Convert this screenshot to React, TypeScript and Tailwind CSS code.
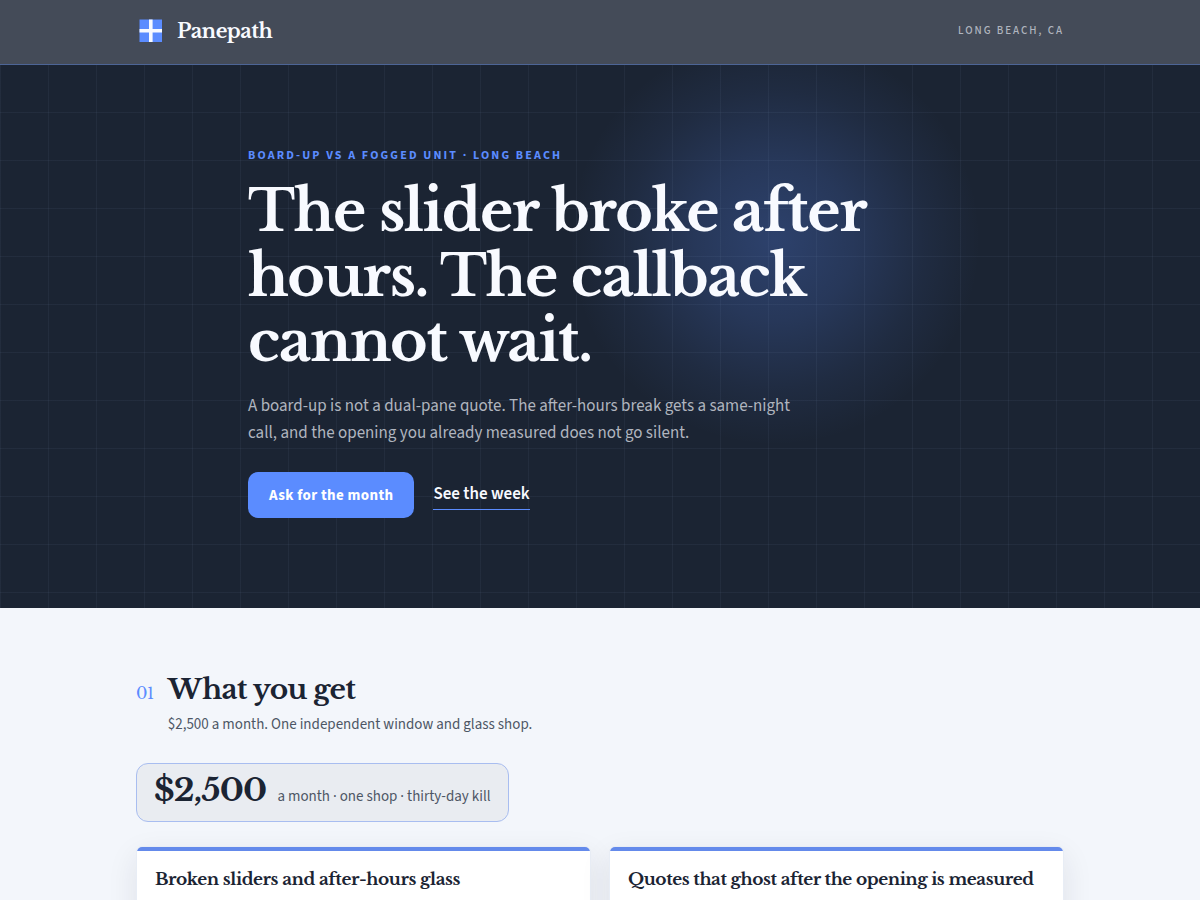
import clsx from "clsx";

const serif =
  "font-['Libre_Baskerville','Liberation_Serif',serif] font-bold tracking-tight";
const sans = "font-['Source_Sans_3','Source_Sans_Pro','Noto_Sans_CJK_SC',sans-serif]";

const features = [
  { title: "Broken sliders and after-hours glass" },
  { title: "Quotes that ghost after the opening is measured" },
];

const Logo = () => (
  <svg width="29" height="30" viewBox="0 0 29 30" aria-hidden="true">
    <rect x="3.5" y="3.5" width="22.5" height="22.5" fill="#5b8cff" />
    <path d="M14.8 3.5v22.5M3.5 14.7h22.5" stroke="#f8faff" strokeWidth="3.6" />
  </svg>
);

const Header = () => (
  <header className="border-b border-[#4d6596] bg-[#444b58]">
    <div className="flex items-center justify-between px-6 pt-4 pb-[18px] mx-auto max-w-[976px]">
      <a href="#top" className="flex items-center gap-3 text-[#f8faff]">
        <Logo />
        <span className={clsx(serif, "text-xl leading-[30px]")}>Panepath</span>
      </a>
      <span className="text-[11px] leading-4 font-medium uppercase tracking-[2px] text-[#b0b5bf]">
        Long Beach, CA
      </span>
    </div>
  </header>
);

const Hero = () => (
  <section
    id="top"
    className="bg-[#1b2433] bg-[radial-gradient(circle_at_775px_175px,#5b8cff48_0px,#5b8cff30_80px,#5b8cff12_150px,transparent_205px)]"
  >
    {/* Window pane grid */}
    <div className="px-6 pt-20 pb-[90px] bg-[linear-gradient(#8ca5c812_1px,transparent_1px),linear-gradient(90deg,#8ca5c812_1px,transparent_1px)] bg-[size:48px_48px] bg-[position:0_-1px]">
      <div className="mx-auto max-w-[704px]">
        <p className="text-xs leading-[22px] font-bold uppercase tracking-[0.18em] text-[#5b8cff]">
          Board-up vs a fogged unit · Long Beach
        </p>
        <h1
          className={clsx(serif, "mt-3 text-[57px] leading-[65px] text-[#f8faff]")}
        >
          The slider broke after hours. The callback cannot wait.
        </h1>
        <p className="mt-[19px] max-w-[560px] text-[17px] leading-[27px] text-[#b0b5bf]">
          A board-up is not a dual-pane quote. The after-hours break gets a
          same-night call, and the opening you already measured does not go
          silent.
        </p>
        <div className="flex items-center mt-[25px] gap-[19px]">
          <button
            type="button"
            className="px-[21px] pt-px rounded-[10px] bg-[#5b8cff] text-[15px] leading-[45px] font-bold tracking-wide text-white"
          >
            Ask for the month
          </button>
          <a
            href="#offer"
            className="pb-px border-b border-[#5b8cff] text-[17px] leading-7 font-semibold text-[#f8faff]"
          >
            See the week
          </a>
        </div>
      </div>
    </div>
  </section>
);

const Offer = () => (
  <section id="offer" className="px-6 pt-16 pb-16">
    <div className="mx-auto max-w-[928px]">
      <div className="flex items-baseline gap-[14px]">
        <span className={clsx(serif, "text-base font-normal text-[#5b8cff]")}>
          01
        </span>
        <div>
          <h2 className={clsx(serif, "text-[28px] leading-9")}>What you get</h2>
          <p className="mt-[5px] text-[15px] leading-6 text-[#4d5665]">
            $2,500 a month. One independent window and glass shop.
          </p>
        </div>
      </div>
      <div className="flex w-fit items-baseline gap-[11px] px-[17px] pt-[5px] pb-[10px] mt-[26px] border rounded-xl border-[#a8bdf0] bg-[#e9ecf1]">
        <strong className={clsx(serif, "text-[32px] leading-[42px]")}>
          $2,500
        </strong>
        <span className="text-[15px] leading-6 text-[#4d5665]">
          a month · one shop · thirty-day kill
        </span>
      </div>
      {/* Cards */}
      <div className="grid grid-cols-2 gap-[18px] mt-6">
        {features.map((feature) => (
          <article
            key={feature.title}
            className="overflow-hidden bg-white border rounded-md border-[#e8edf5] shadow-[0_10px_30px_#1b243318]"
          >
            <div className="h-1 bg-[#648aeb]" />
            <h3 className={clsx(serif, "px-[18px] pt-[17px] pb-16 text-[17px] leading-6")}>
              {feature.title}
            </h3>
          </article>
        ))}
      </div>
    </div>
  </section>
);

const App = () => {
  return (
    <main className={clsx(sans, "min-h-screen bg-[#f3f6fb] text-[#1b2433]")}>
      <Header />
      <Hero />
      <Offer />
    </main>
  );
};

export default App;
